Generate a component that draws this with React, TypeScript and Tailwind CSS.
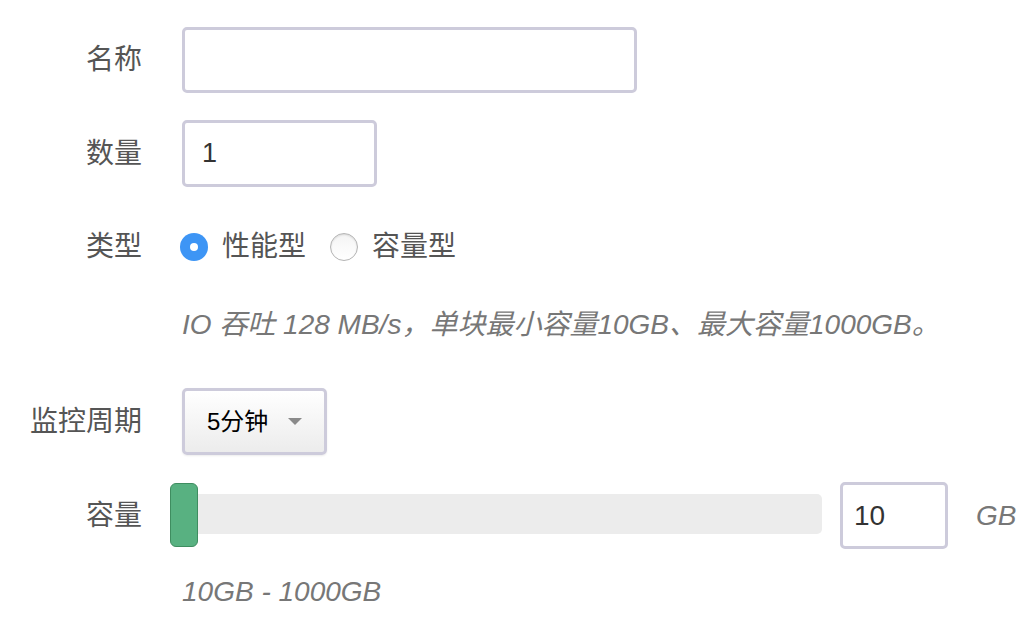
import { useState } from 'react'

const font = "font-['Liberation_Sans','Noto_Sans_CJK_SC',sans-serif]"

function Label({ children }: { children: React.ReactNode }) {
  return <div className="w-[142px] shrink-0 text-right text-[28px] text-[#555]">{children}</div>
}

function Radio({ checked, label, onClick }: { checked: boolean; label: string; onClick: () => void }) {
  return (
    <button type="button" onClick={onClick} className="flex items-center gap-[14px]">
      {checked ? (
        <span className="flex h-[28px] w-[28px] items-center justify-center rounded-full bg-[#3d95f5]">
          <span className="h-[8px] w-[8px] rounded-full bg-white" />
        </span>
      ) : (
        <span className="h-[28px] w-[28px] rounded-full border border-[#b4b4b4] bg-gradient-to-b from-[#f4f4f4] to-white shadow-[inset_0_1px_2px_rgba(0,0,0,0.12)]" />
      )}
      <span className="text-[28px] text-[#555]">{label}</span>
    </button>
  )
}

export default function App() {
  const [tipo, setTipo] = useState<'perf' | 'cap'>('perf')
  const [cantidad, setCantidad] = useState('1')
  const [capacidad, setCapacidad] = useState('10')

  return (
    <div className={`${font} flex flex-col bg-white pt-[27px] h-[624px] w-[1036px]`}>
      {/* 名称 */}
      <div className="flex h-[66px] items-center gap-[40px]">
        <Label>名称</Label>
        <input
          type="text"
          className="h-[66px] w-[455px] rounded-[5px] border-[3px] border-[#cdcbdb] bg-white px-[17px] text-[28px] text-[#333] outline-none"
        />
      </div>

      {/* 数量 */}
      <div className="mt-[27px] flex h-[67px] items-center gap-[40px]">
        <Label>数量</Label>
        <input
          type="text"
          value={cantidad}
          onChange={(e) => setCantidad(e.target.value)}
          className="h-[67px] w-[195px] rounded-[5px] border-[3px] border-[#cdcbdb] bg-white px-[17px] text-[27px] text-[#333] outline-none"
        />
      </div>

      {/* 类型 */}
      <div className="mt-[27px] flex h-[66px] items-center gap-[38px]">
        <Label>类型</Label>
        <div className="flex items-center gap-[24px]">
          <Radio checked={tipo === 'perf'} label="性能型" onClick={() => setTipo('perf')} />
          <Radio checked={tipo === 'cap'} label="容量型" onClick={() => setTipo('cap')} />
        </div>
      </div>

      <p className="mt-[25px] ml-[182px] h-[40px] text-[28px] leading-[40px] italic text-[#777]">
        IO 吞吐 128 MB/s，单块最小容量10GB、最大容量1000GB。
      </p>

      {/* 监控周期 */}
      <div className="mt-[43px] flex h-[67px] items-center gap-[40px]">
        <Label>监控周期</Label>
        <button
          type="button"
          className="flex h-[67px] w-[145px] items-center rounded-[5px] border-[3px] border-[#cdcbdb] bg-gradient-to-b from-white to-[#ececec] pl-[22px] pr-[22px] shadow-[0_1px_2px_rgba(0,0,0,0.08)]"
        >
          <span className="text-[24px] text-black">5分钟</span>
          <span className="ml-auto h-0 w-0 border-x-[7px] border-t-[7px] border-x-transparent border-t-[#8a8a8a]" />
        </button>
      </div>

      {/* 容量 */}
      <div className="mt-[27px] flex h-[67px] items-center">
        <Label>容量</Label>
        <div className="relative mb-[4px] ml-[28px] h-[40px] w-[652px] rounded-[5px] bg-[#ececec]">
          <div className="absolute left-0 top-[-11px] h-[64px] w-[28px] rounded-[6px] border border-[#3f8d60] bg-[#58b181]" />
        </div>
        <input
          type="text"
          value={capacidad}
          onChange={(e) => setCapacidad(e.target.value)}
          className="ml-[18px] h-[67px] w-[108px] rounded-[5px] border-[3px] border-[#cdcbdb] bg-white px-[11px] text-[28px] text-[#333] outline-none"
        />
        <span className="ml-[28px] text-[28px] italic text-[#777]">GB</span>
      </div>

      <p className="mt-[23px] ml-[182px] h-[40px] text-[28px] leading-[40px] italic text-[#777]">
        10GB - 1000GB
      </p>
    </div>
  )
}
